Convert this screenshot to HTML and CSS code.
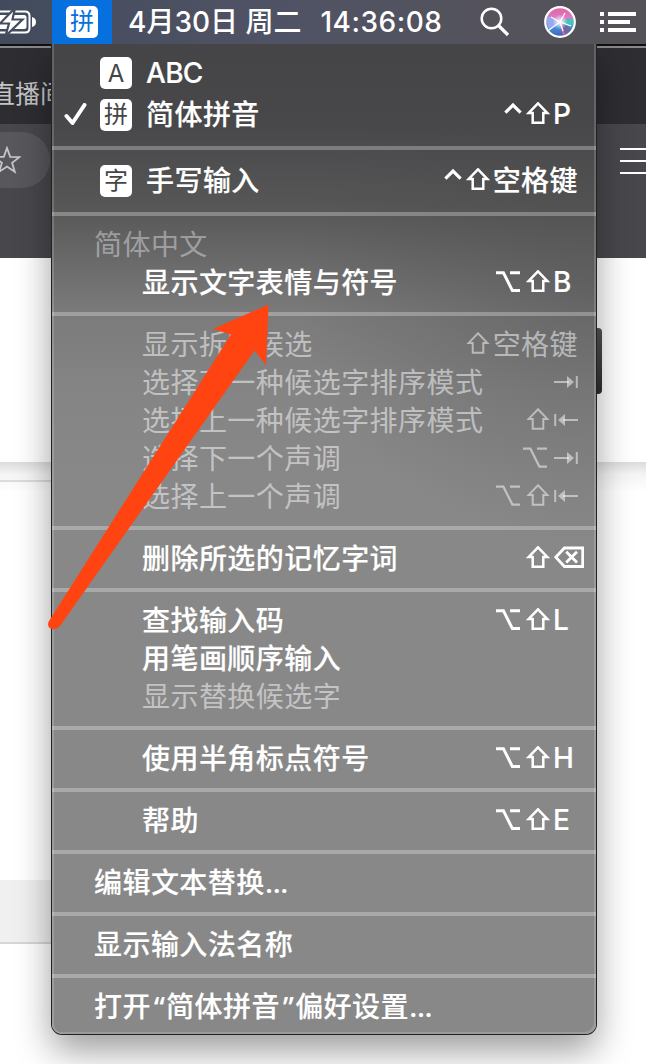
FILE: index.html
```html
<!DOCTYPE html>
<html lang="zh-CN">

<head>
  <meta charset="UTF-8">
  <title>简体拼音</title>
  <meta name="viewport" content="width=device-width, initial-scale=1.0">
  <link rel="stylesheet" href="styles.css">
</head>

<body>
<!-- shortcut glyphs -->
<svg class="defs" width="0" height="0">
  <symbol id="shift" viewBox="0 0 24 26">
    <path d="M12 1.300 L21.300 10.900 H17.300 V20.800 H6.700 V10.900 H2.700 Z" fill="none" stroke="currentColor"/>
  </symbol>
  <symbol id="option" viewBox="0 0 24 26">
    <path d="M0 2.700 H7.400 L16.400 20.600 H24 M14 2.700 H24" fill="none" stroke="currentColor"/>
  </symbol>
  <symbol id="control" viewBox="0 0 18 26">
    <path d="M1.400 10.600 L9 3 L16.600 10.600" fill="none" stroke="currentColor"/>
  </symbol>
  <symbol id="tab" viewBox="0 0 24 26">
    <path d="M0 12 H15 M22.800 6 V18" fill="none" stroke="currentColor"/>
    <path d="M13 6 L20 12 L13 18 Z" fill="currentColor"/>
  </symbol>
  <symbol id="backtab" viewBox="0 0 24 26">
    <path d="M24 12 H9 M1.200 6 V18" fill="none" stroke="currentColor"/>
    <path d="M11 6 L4 12 L11 18 Z" fill="currentColor"/>
  </symbol>
  <symbol id="delete" viewBox="0 0 30 26">
    <path d="M10.400 2 H28.700 V20.500 H10.400 L1.800 11.200 Z M12.200 5.800 L23 16.600 M23 5.800 L12.200 16.600" fill="none" stroke="currentColor"/>
  </symbol>
</svg>

<div class="desktop">
  <div class="menubar">
    <svg class="battery" width="38" height="30" viewBox="0 0 38 30">
      <path d="M0 4.500 H25 Q29.500 4.500 29.500 9 V21 Q29.500 25.500 25 25.500 H0" fill="none" stroke="#fff" stroke-width="2"/>
      <path d="M0 8 H24 Q26.500 8 26.500 10.500 V19.500 Q26.500 22 24 22 H0 Z" fill="#fff"/>
      <path d="M32 10 Q36 11 36 15 Q36 19 32 20 Z" fill="#fff"/>
      <path d="M15 1 L0 16.500 H9 L5.500 29 L22.500 12.500 H12.500 Z" fill="#fff" stroke="#454d5f" stroke-width="2.200"/>
    </svg>
    <div class="input-source"><span class="badge blue">拼</span></div>
    <div class="clock"><span>4月30日 周二</span><span class="time">14:36:08</span></div>
    <svg class="search" width="30" height="30" viewBox="0 0 30 30">
      <circle cx="11.500" cy="11.500" r="9.800" fill="none" stroke="#fff" stroke-width="2.500"/>
      <path d="M18.500 18.500 L28 28" stroke="#fff" stroke-width="3.200"/>
    </svg>
    <svg class="siri" width="32" height="32" viewBox="0 0 32 32">
      <defs>
        <linearGradient id="orb" x1="0" y1="0" x2="0" y2="1">
          <stop offset="0" stop-color="#e8609c"/>
          <stop offset=".35" stop-color="#d87cc4"/>
          <stop offset=".6" stop-color="#4d9be6"/>
          <stop offset="1" stop-color="#3c60b5"/>
        </linearGradient>
        <radialGradient id="glow">
          <stop offset="0" stop-color="#fff"/>
          <stop offset="1" stop-color="#fff" stop-opacity="0"/>
        </radialGradient>
      </defs>
      <circle cx="16" cy="16" r="14.800" fill="url(#orb)" stroke="#fff" stroke-width="2.200"/>
      <path d="M16 16 L4 10 Q1.500 17 5 23 Z" fill="#9aa8ee"/>
      <path d="M16 16 L28 12 Q31 16 28 20 Z" fill="#45c5b5"/>
      <path d="M16 16 L20 29 Q25 27 27 22 Z" fill="#6b6a9c"/>
      <path d="M16 16 L20 28.500" stroke="#f25aa5" stroke-width="2"/>
      <path d="M16 16 L7 11 M16 16 L5 24 M16 16 L21 7 M16 16 L27 20 M16 16 L19 25" stroke="#fff" stroke-width="1.300"/>
      <circle cx="16" cy="16" r="7.500" fill="url(#glow)"/>
    </svg>
    <svg class="list" width="36" height="20" viewBox="0 0 36 20">
      <path d="M0 2 H4 M8 2 H36 M0 10 H4 M8 10 H30 M0 18 H4 M8 18 H36" stroke="#fff" stroke-width="4"/>
    </svg>
  </div>

  <!-- browser window behind the menu -->
  <div class="browser">
    <div class="tabs">直播间</div>
    <div class="toolbar">
      <div class="address">
        <svg width="28" height="28" viewBox="0 0 28 28">
          <path d="M14 2 L17.200 10.800 L26.500 11.100 L19.100 16.800 L21.800 25.800 L14 20.500 L6.200 25.800 L8.900 16.800 L1.500 11.100 L10.800 10.800 Z" fill="none" stroke="#c6c6c9" stroke-width="1.800"/>
        </svg>
      </div>
      <div class="hamburger"><i></i><i></i><i></i></div>
    </div>
    <div class="page-head"></div>
    <div class="page-strip"></div>
    <div class="page-body"></div>
    <div class="page-band"></div>
    <div class="scroll-thumb"></div>
  </div>

  <div class="menu">
    <div class="group sources first">
      <div class="item"><span class="check"></span><span class="badge latin">A</span><span class="abc">ABC</span></div>
      <div class="item">
        <span class="check"><svg width="24" height="24" viewBox="0 0 24 24"><path d="M2.500 13 L8.500 20 L20.500 2" fill="none" stroke="#fff" stroke-width="4" stroke-linecap="round" stroke-linejoin="round"/></svg></span>
        <span class="badge">拼</span><span>简体拼音</span>
        <span class="keys"><svg class="k ctl"><use href="#control"/></svg><svg class="k"><use href="#shift"/></svg><b class="letter">P</b></span>
      </div>
    </div>
    <div class="group sources">
      <div class="item">
        <span class="check"></span><span class="badge">字</span><span>手写输入</span>
        <span class="keys"><svg class="k ctl"><use href="#control"/></svg><svg class="k"><use href="#shift"/></svg><b>空格键</b></span>
      </div>
    </div>
    <div class="group">
      <div class="item heading off">简体中文</div>
      <div class="item">显示文字表情与符号<span class="keys"><svg class="k opt"><use href="#option"/></svg><svg class="k"><use href="#shift"/></svg><b class="letter">B</b></span></div>
    </div>
    <div class="group">
      <div class="item off">显示拆字候选<span class="keys"><svg class="k"><use href="#shift"/></svg><b>空格键</b></span></div>
      <div class="item off">选择下一种候选字排序模式<span class="keys"><b><svg class="k"><use href="#tab"/></svg></b></span></div>
      <div class="item off">选择上一种候选字排序模式<span class="keys"><svg class="k"><use href="#shift"/></svg><b><svg class="k"><use href="#backtab"/></svg></b></span></div>
      <div class="item off">选择下一个声调<span class="keys"><svg class="k opt"><use href="#option"/></svg><b><svg class="k"><use href="#tab"/></svg></b></span></div>
      <div class="item off">选择上一个声调<span class="keys"><svg class="k opt"><use href="#option"/></svg><svg class="k"><use href="#shift"/></svg><b><svg class="k"><use href="#backtab"/></svg></b></span></div>
    </div>
    <div class="group">
      <div class="item">删除所选的记忆字词<span class="keys"><svg class="k"><use href="#shift"/></svg><b><svg class="k del"><use href="#delete"/></svg></b></span></div>
    </div>
    <div class="group">
      <div class="item">查找输入码<span class="keys"><svg class="k opt"><use href="#option"/></svg><svg class="k"><use href="#shift"/></svg><b class="letter">L</b></span></div>
      <div class="item">用笔画顺序输入</div>
      <div class="item off">显示替换候选字</div>
    </div>
    <div class="group">
      <div class="item">使用半角标点符号<span class="keys"><svg class="k opt"><use href="#option"/></svg><svg class="k"><use href="#shift"/></svg><b class="letter">H</b></span></div>
    </div>
    <div class="group">
      <div class="item">帮助<span class="keys"><svg class="k opt"><use href="#option"/></svg><svg class="k"><use href="#shift"/></svg><b class="letter">E</b></span></div>
    </div>
    <div class="group">
      <div class="item heading">编辑文本替换<span class="dots">...</span></div>
    </div>
    <div class="group">
      <div class="item heading">显示输入法名称</div>
    </div>
    <div class="group last">
      <div class="item heading">打开<span class="quote">“</span>简体拼音<span class="quote">”</span>偏好设置<span class="dots">...</span></div>
    </div>
  </div>

  <!-- red pointer -->
  <svg class="arrow" width="646" height="1064" viewBox="0 0 646 1064">
    <path d="M268.500 304.500 L213 329 L231 334.500 L49 621 Q46.500 626 50.500 628.500 Q56 631 60 626 L254.500 350.500 L266 365 Z" fill="#ff4412"/>
  </svg>
</div>
</body>
</html>
```
FILE: styles.css
```css
body {
  margin: 0;
  background: #fff;
  font-family: Inter, "Noto Sans CJK SC", sans-serif;
  color: #fff;
}

.defs {
  position: absolute;
}

.desktop {
  position: relative;
  width: 646px;
  height: 1064px;
  overflow: hidden;
}

/* menu bar */
.menubar {
  position: relative;
  z-index: 2;
  display: flex;
  align-items: center;
  height: 44px;
  background: linear-gradient(90deg, #414b5c 0, #4b5061 25%, #505365 45%, #54535c 75%, #545257 100%);
}

.battery {
  width: 38px;
  flex: none;
  margin-right: 14px;
}

.input-source {
  width: 60px;
  height: 44px;
  flex: none;
  display: flex;
  align-items: center;
  justify-content: center;
  background: #0670df;
}

.badge {
  width: 32px;
  height: 32px;
  flex: none;
  border-radius: 5px;
  background: #fff;
  color: #454547;
  font-size: 24px;
  line-height: 31px;
  text-align: center;
  font-weight: 400;
  letter-spacing: 0;
  -webkit-text-stroke: 0;
}

.badge.blue {
  color: #0670df;
}

.badge.latin {
  line-height: 33px;
}

.clock {
  display: flex;
  flex: none;
  width: 330px;
  margin-left: 16px;
  font-size: 28px;
  font-weight: 500;
  line-height: 44px;
  white-space: nowrap;
}

.time {
  margin-left: 19px;
  letter-spacing: .5px;
}

.search {
  margin-left: 22px;
  flex: none;
}

.siri {
  margin-left: 34px;
  flex: none;
}

.list {
  margin-left: 24px;
  flex: none;
}

/* browser window */
.browser {
  position: relative;
  height: 1020px;
}

.tabs {
  box-sizing: border-box;
  height: 80px;
  border-top: 2px solid #111;
  box-shadow: inset 0 2px 0 #88888a;
  background: #2e2d32;
  color: #c4c4c6;
  font-size: 25px;
  line-height: 97px;
  text-indent: -10px;
}

.toolbar {
  display: flex;
  justify-content: space-between;
  height: 134px;
  background: #48474c;
}

.address {
  width: 50px;
  height: 56px;
  margin-top: 8px;
  border-radius: 0 28px 28px 0;
  background: #58575c;
}

.address svg {
  margin: 14px 0 0 -7px;
}

.hamburger {
  width: 26px;
  padding-top: 24px;
}

.hamburger i {
  display: block;
  height: 2px;
  margin-bottom: 10px;
  background: #fff;
}

.page-head {
  height: 204px;
  background: #fff;
}

/* divider only runs under the left part of the page */
.page-strip {
  height: 30px;
  background:
    linear-gradient(#dcdcdc, #dcdcdc) 0 18px / 300px 2px no-repeat,
    linear-gradient(#dcdcdc, #f4f4f4 12px, #fff);
}

.page-body {
  height: 388px;
}

.page-band {
  height: 62px;
  width: 300px;
  border-bottom: 2px solid #d6d6d6;
  background: #f0f0f0;
}

.scroll-thumb {
  position: absolute;
  top: 284px;
  left: 590px;
  width: 12px;
  height: 66px;
  border-radius: 4px;
  background: linear-gradient(#555, #2e2e2e);
}

/* input menu */
.menu {
  position: absolute;
  top: 44px;
  left: 52px;
  width: 544px;
  height: 990px;
  border-radius: 0 0 10px 10px;
  background:
    radial-gradient(ellipse 300px 260px at 544px 240px, rgba(70, 70, 72, .4), transparent),
    linear-gradient(#454547 0, #48484a 80px, #565657 160px, #69696a 215px, #7b7b7c 270px, #858585 350px, #888 440px, #888 100%);
  box-shadow: inset 2px 0 0 rgba(255, 255, 255, .16), inset -2px -2px 0 rgba(255, 255, 255, .16),
    0 0 0 1px #222, 0 16px 36px rgba(0, 0, 0, .4);
}

.group {
  padding: 10px 0;
  border-bottom: 4px solid rgba(255, 255, 255, .28);
}

.group.first {
  padding-top: 8px;
}

.group.last {
  border-bottom: none;
}

.item {
  display: flex;
  align-items: center;
  height: 38px;
  padding: 0 18px 0 90px;
  font-size: 28px;
  font-weight: 500;
  letter-spacing: .45px;
  line-height: 38px;
  white-space: nowrap;
  -webkit-text-stroke: .15px #fff;
}

.item.heading {
  padding-left: 42px;
}

.item.off {
  color: rgba(255, 255, 255, .5);
  font-weight: 400;
  -webkit-text-stroke: 0;
}

.item.heading.off {
  color: rgba(255, 255, 255, .4);
}

.sources .item {
  height: 42px;
  padding-left: 12px;
}

.check {
  width: 36px;
  height: 24px;
  line-height: 0;
}

.sources .badge {
  margin-right: 14px;
}

.abc {
  letter-spacing: -.7px;
}

.keys {
  display: flex;
  align-items: center;
  margin-left: auto;
}

.keys b {
  display: flex;
  min-width: 25px;
  font-weight: inherit;
}

.keys .letter {
  padding-bottom: 2px;
}

.k {
  flex: none;
  width: 24px;
  height: 26px;
  margin-right: 3px;
  stroke-width: 2.5;
}

.off .k {
  stroke-width: 2;
}

.k.ctl {
  width: 18px;
  margin-right: 4px;
  stroke-width: 3.2;
}

.k.opt {
  margin-right: 6px;
  stroke-width: 3;
}

.off .k.opt {
  stroke-width: 2.2;
}

.keys b .k {
  margin: 0 0 0 1px;
}

.keys b .del {
  width: 30px;
  margin-right: -6px;
  stroke-width: 2.8;
}

.quote {
  padding: 0 1px 0 3px;
  font-family: "Noto Sans", sans-serif;
}

.dots {
  letter-spacing: -.8px;
}

.arrow {
  position: absolute;
  top: 0;
  left: 0;
}
```
